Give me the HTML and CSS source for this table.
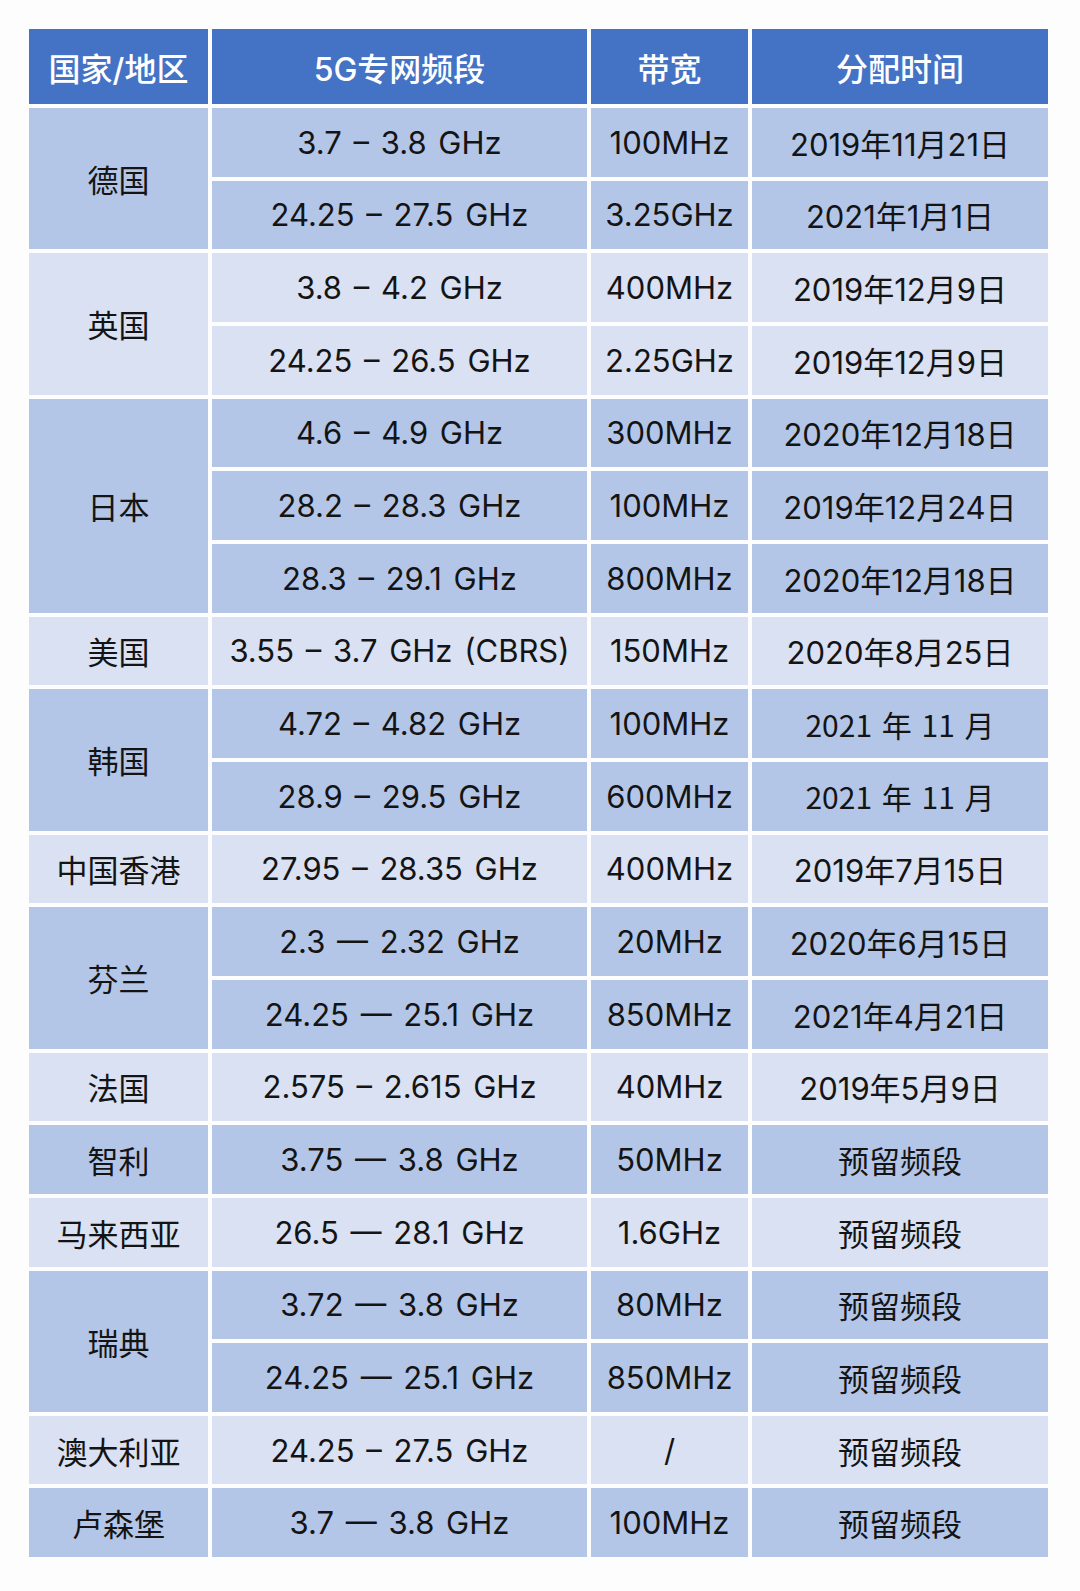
FILE: index.html
```html
<!DOCTYPE html>
<html lang="zh-CN">
<head>
<meta charset="utf-8">
<title>5G专网频段</title>
<link rel="stylesheet" href="styles.css">
</head>
<body>
<div class="sheet">
  <div class="grid">
    <div class="cell head">国家/地区</div>
    <div class="cell head">5G专网频段</div>
    <div class="cell head">带宽</div>
    <div class="cell head">分配时间</div>

    <div class="cell d span2">德国</div>
    <div class="cell d">3.7 – 3.8 GHz</div>
    <div class="cell d">100MHz</div>
    <div class="cell d">2019年11月21日</div>
    <div class="cell d">24.25 – 27.5 GHz</div>
    <div class="cell d">3.25GHz</div>
    <div class="cell d">2021年1月1日</div>

    <div class="cell l span2">英国</div>
    <div class="cell l">3.8 – 4.2 GHz</div>
    <div class="cell l">400MHz</div>
    <div class="cell l">2019年12月9日</div>
    <div class="cell l">24.25 – 26.5 GHz</div>
    <div class="cell l">2.25GHz</div>
    <div class="cell l">2019年12月9日</div>

    <div class="cell d span3">日本</div>
    <div class="cell d">4.6 – 4.9 GHz</div>
    <div class="cell d">300MHz</div>
    <div class="cell d">2020年12月18日</div>
    <div class="cell d">28.2 – 28.3 GHz</div>
    <div class="cell d">100MHz</div>
    <div class="cell d">2019年12月24日</div>
    <div class="cell d">28.3 – 29.1 GHz</div>
    <div class="cell d">800MHz</div>
    <div class="cell d">2020年12月18日</div>

    <div class="cell l">美国</div>
    <div class="cell l">3.55 – 3.7 GHz (CBRS)</div>
    <div class="cell l">150MHz</div>
    <div class="cell l">2020年8月25日</div>

    <div class="cell d span2">韩国</div>
    <div class="cell d">4.72 – 4.82 GHz</div>
    <div class="cell d">100MHz</div>
    <div class="cell d alt">2021 年 11 月</div>
    <div class="cell d">28.9 – 29.5 GHz</div>
    <div class="cell d">600MHz</div>
    <div class="cell d alt">2021 年 11 月</div>

    <div class="cell l">中国香港</div>
    <div class="cell l">27.95 – 28.35 GHz</div>
    <div class="cell l">400MHz</div>
    <div class="cell l">2019年7月15日</div>

    <div class="cell d span2">芬兰</div>
    <div class="cell d">2.3 — 2.32 GHz</div>
    <div class="cell d">20MHz</div>
    <div class="cell d">2020年6月15日</div>
    <div class="cell d">24.25 — 25.1 GHz</div>
    <div class="cell d">850MHz</div>
    <div class="cell d">2021年4月21日</div>

    <div class="cell l">法国</div>
    <div class="cell l">2.575 – 2.615 GHz</div>
    <div class="cell l">40MHz</div>
    <div class="cell l">2019年5月9日</div>

    <div class="cell d">智利</div>
    <div class="cell d">3.75 — 3.8 GHz</div>
    <div class="cell d">50MHz</div>
    <div class="cell d">预留频段</div>

    <div class="cell l">马来西亚</div>
    <div class="cell l">26.5 — 28.1 GHz</div>
    <div class="cell l">1.6GHz</div>
    <div class="cell l">预留频段</div>

    <div class="cell d span2">瑞典</div>
    <div class="cell d">3.72 — 3.8 GHz</div>
    <div class="cell d">80MHz</div>
    <div class="cell d">预留频段</div>
    <div class="cell d">24.25 — 25.1 GHz</div>
    <div class="cell d">850MHz</div>
    <div class="cell d">预留频段</div>

    <div class="cell l">澳大利亚</div>
    <div class="cell l">24.25 – 27.5 GHz</div>
    <div class="cell l">/</div>
    <div class="cell l">预留频段</div>

    <div class="cell d">卢森堡</div>
    <div class="cell d">3.7 — 3.8 GHz</div>
    <div class="cell d">100MHz</div>
    <div class="cell d">预留频段</div>
  </div>
</div>
</body>
</html>
```

FILE: styles.css
```css
html, body {
  margin: 0;
  padding: 0;
  background: #fdfdfd;
}

.sheet {
  padding: 29px 0 0 29px;
}

.grid {
  display: grid;
  grid-template-columns: 179px 375px 157px 296px;
  grid-template-rows: 75px repeat(20, 68.67px);
  gap: 4px;
  width: max-content;
  font-family: "Inter", "Noto Sans CJK SC", sans-serif;
  font-size: 31px;
  word-spacing: 3px;
  color: #141414;
}

.cell {
  display: flex;
  align-items: center;
  justify-content: center;
  white-space: nowrap;
}

.head {
  background: #4472c4;
  color: #ffffff;
  font-size: 32px;
  font-weight: 500;
}

.d {
  background: #b4c6e7;
}

.l {
  background: #d9e1f2;
}

.span2 {
  grid-row: span 2;
}

.span3 {
  grid-row: span 3;
}

.alt {
  font-family: "Noto Sans CJK SC", sans-serif;
  font-size: 30px;
  word-spacing: 3px;
}
```
